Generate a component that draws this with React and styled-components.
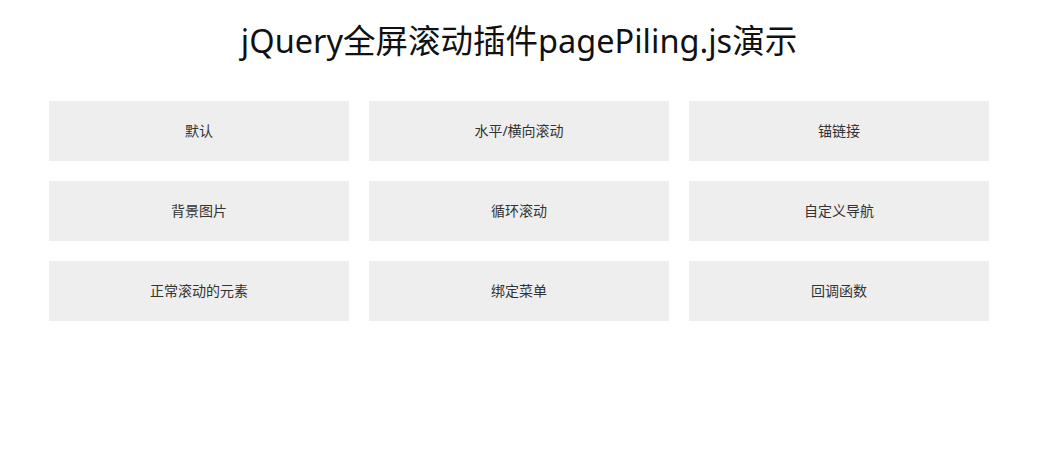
import React from 'react';
import styled, {createGlobalStyle} from 'styled-components';

const items = [
  '默认', '水平/横向滚动', '锚链接',
  '背景图片', '循环滚动', '自定义导航',
  '正常滚动的元素', '绑定菜单', '回调函数',
];

const App = () => {
  return (
    <Page>
      <GlobalStyle />
      <Title>jQuery全屏滚动插件pagePiling.js演示</Title>
      <Grid>
        {items.map((text) => (
          <Tile key={text}>{text}</Tile>
        ))}
      </Grid>
    </Page>
  );
};

const GlobalStyle = createGlobalStyle`
  html, body {
    margin: 0;
    padding: 0;
    background: #fff;
  }
  body {
    font-family: "Noto Sans", "Noto Sans CJK SC", sans-serif;
  }
`;

const Page = styled.div`
  width: calc(100% - 15px);
  display: flex;
  flex-direction: column;
  align-items: center;
`;

const Title = styled.h1`
  margin: 0;
  padding-top: 13px;
  height: 101px;
  box-sizing: border-box;
  font-size: 32.5px;
  font-weight: 400;
  line-height: 56px;
  color: #111;
`;

const Grid = styled.div`
  display: grid;
  grid-template-columns: repeat(3, 300px);
  gap: 20px;
`;

const Tile = styled.div`
  height: 60px;
  padding-bottom: 2px;
  box-sizing: border-box;
  background-color: #eee;
  display: flex;
  justify-content: center;
  align-items: center;
  font-size: 14px;
  color: #333;
`;

export default App;
